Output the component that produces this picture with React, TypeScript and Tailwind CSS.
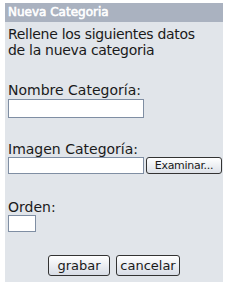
import React from 'react'

export default function App() {
  return (
    <div className="w-[229px] h-[289px] bg-white pt-[3px] pl-[5px]" style={{ fontFamily: '"DejaVu Sans", Verdana, sans-serif' }}>
      <div className="w-[218px] h-[279px] bg-[#e1e5ea] flex flex-col">
        <div className="h-[19px] bg-[#aab2c0] pl-[3px] text-white text-[12px] leading-[19px] [-webkit-text-stroke:0.6px_white]">Nueva Categoria</div>
        <div className="pl-[3px] text-[14px] leading-[16px] text-[#1a1a1a] flex flex-col">
          <p className="mt-[4px] tracking-[-0.3px]">Rellene los siguientes datos<br />de la nueva categoria</p>

          <label className="mt-[24px]">Nombre Categoría:</label>
          <input className="mt-[1px] w-[136px] h-[19px] bg-white border border-[#7f8ea3]" />

          <label className="mt-[23px]">Imagen Categoría:</label>
          <div className="flex items-center gap-[2px]">
            <input className="w-[136px] h-[17px] bg-white border border-[#7f8ea3]" />
            <button className="w-[76px] h-[17px] rounded-[3px] border border-[#333] bg-gradient-to-b from-white to-[#dde1e8] text-[11px] leading-[15px] tracking-[-0.3px]">Examinar...</button>
          </div>

          <label className="mt-[25px]">Orden:</label>
          <input className="w-[28px] h-[17px] bg-white border border-[#7f8ea3]" />

          <div className="mt-[23px] flex justify-center gap-[6px] pr-[3px]">
            <button className="w-[62px] h-[21px] rounded-[3px] border border-[#333] bg-gradient-to-b from-white to-[#d8dde6] text-[13px] leading-[19px]">grabar</button>
            <button className="w-[64px] h-[21px] rounded-[3px] border border-[#333] bg-gradient-to-b from-white to-[#d8dde6] text-[13px] leading-[19px]">cancelar</button>
          </div>
        </div>
      </div>
    </div>
  )
}
